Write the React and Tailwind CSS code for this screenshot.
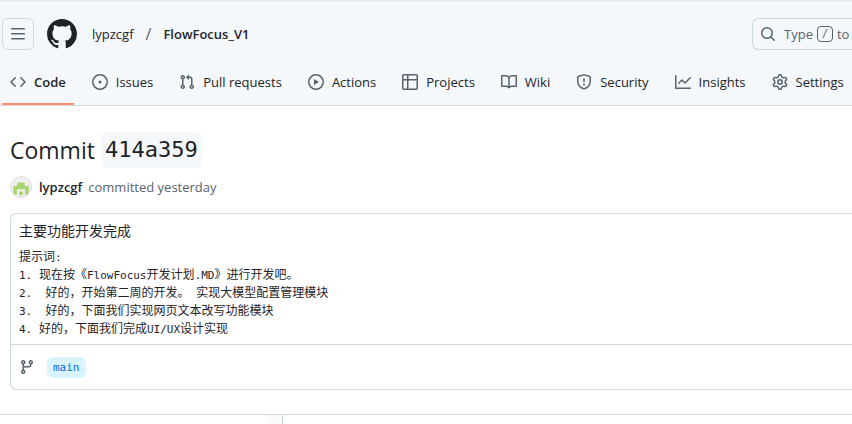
const icons = {
  bars: "M1 2.75A.75.75 0 0 1 1.75 2h12.5a.75.75 0 0 1 0 1.5H1.75A.75.75 0 0 1 1 2.75Zm0 5A.75.75 0 0 1 1.75 7h12.5a.75.75 0 0 1 0 1.5H1.75A.75.75 0 0 1 1 7.75ZM1.75 12h12.5a.75.75 0 0 1 0 1.5H1.75a.75.75 0 0 1 0-1.5Z",
  github:
    "M8 0c4.42 0 8 3.58 8 8a8.013 8.013 0 0 1-5.45 7.59c-.4.08-.55-.17-.55-.38 0-.27.01-1.13.01-2.2 0-.75-.25-1.23-.54-1.48 1.78-.2 3.65-.88 3.65-3.95 0-.88-.31-1.59-.82-2.15.08-.2.36-1.02-.08-2.12 0 0-.67-.22-2.2.82-.64-.18-1.32-.27-2-.27-.68 0-1.36.09-2 .27-1.53-1.03-2.2-.82-2.2-.82-.44 1.1-.16 1.92-.08 2.12-.51.56-.82 1.28-.82 2.15 0 3.06 1.86 3.75 3.64 3.95-.23.2-.44.55-.51 1.07-.46.21-1.61.55-2.33-.66-.15-.24-.6-.83-1.23-.82-.67.01-.27.38.01.53.34.19.73.9.82 1.13.16.45.68 1.31 2.69.94 0 .67.01 1.3.01 1.49 0 .21-.15.45-.55.38A7.995 7.995 0 0 1 0 8c0-4.42 3.58-8 8-8Z",
  search:
    "M10.68 11.74a6 6 0 0 1-7.922-8.982 6 6 0 0 1 8.982 7.922l3.04 3.04a.749.749 0 0 1-.326 1.275.749.749 0 0 1-.734-.215ZM11.5 7a4.499 4.499 0 1 0-8.997 0A4.499 4.499 0 0 0 11.5 7Z",
  code: "m11.28 3.22 4.25 4.25a.75.75 0 0 1 0 1.06l-4.25 4.25a.749.749 0 0 1-1.275-.326.749.749 0 0 1 .215-.734L13.94 8l-3.72-3.72a.749.749 0 0 1 .326-1.275.749.749 0 0 1 .734.215Zm-6.56 0a.751.751 0 0 1 1.042.018.751.751 0 0 1 .018 1.042L2.06 8l3.72 3.72a.749.749 0 0 1-.326 1.275.749.749 0 0 1-.734-.215L.47 8.53a.75.75 0 0 1 0-1.06Z",
  issue:
    "M8 9.5a1.5 1.5 0 1 0 0-3 1.5 1.5 0 0 0 0 3ZM8 0a8 8 0 1 1 0 16A8 8 0 0 1 8 0ZM1.5 8a6.5 6.5 0 1 0 13 0 6.5 6.5 0 0 0-13 0Z",
  pull: "M1.5 3.25a2.25 2.25 0 1 1 3 2.122v5.256a2.251 2.251 0 1 1-1.5 0V5.372A2.25 2.25 0 0 1 1.5 3.25Zm5.677-.177L9.573.677A.25.25 0 0 1 10 .854V2.5h1A2.5 2.5 0 0 1 13.5 5v5.628a2.251 2.251 0 1 1-1.5 0V5a1 1 0 0 0-1-1h-1v1.646a.25.25 0 0 1-.427.177L7.177 3.427a.25.25 0 0 1 0-.354ZM3.75 2.5a.75.75 0 1 0 0 1.5.75.75 0 0 0 0-1.5Zm0 9.5a.75.75 0 1 0 0 1.5.75.75 0 0 0 0-1.5Zm8.25.75a.75.75 0 1 0 1.5 0 .75.75 0 0 0-1.5 0Z",
  play: "M8 0a8 8 0 1 1 0 16A8 8 0 0 1 8 0ZM1.5 8a6.5 6.5 0 1 0 13 0 6.5 6.5 0 0 0-13 0Zm4.879-2.773 4.264 2.559a.25.25 0 0 1 0 .428l-4.264 2.559A.25.25 0 0 1 6 10.559V5.442a.25.25 0 0 1 .379-.215Z",
  table:
    "M0 1.75C0 .784.784 0 1.75 0h12.5C15.216 0 16 .784 16 1.75v12.5A1.75 1.75 0 0 1 14.25 16H1.75A1.75 1.75 0 0 1 0 14.25ZM6.5 6.5v8h7.75a.25.25 0 0 0 .25-.25V6.5Zm8-1.5V1.75a.25.25 0 0 0-.25-.25H6.5V5Zm-13 1.5v7.75c0 .138.112.25.25.25H5v-8ZM5 5V1.5H1.75a.25.25 0 0 0-.25.25V5Z",
  book: "M0 1.75A.75.75 0 0 1 .75 1h4.253c1.227 0 2.317.59 3 1.501A3.743 3.743 0 0 1 11.006 1h4.245a.75.75 0 0 1 .75.75v10.5a.75.75 0 0 1-.75.75h-4.507a2.25 2.25 0 0 0-1.591.659l-.622.621a.75.75 0 0 1-1.06 0l-.622-.621A2.25 2.25 0 0 0 5.258 13H.75a.75.75 0 0 1-.75-.75Zm7.251 10.324.004-5.073-.002-2.253A2.25 2.25 0 0 0 5.003 2.5H1.5v9h3.757a3.75 3.75 0 0 1 1.994.574ZM8.755 4.75l-.004 7.322a3.752 3.752 0 0 1 1.992-.572H14.5v-9h-3.495a2.25 2.25 0 0 0-2.25 2.25Z",
  shield:
    "M7.467.133a1.748 1.748 0 0 1 1.066 0l5.25 1.68A1.75 1.75 0 0 1 15 3.48V7c0 1.566-.32 3.182-1.303 4.682-.983 1.498-2.585 2.813-5.032 3.855a1.697 1.697 0 0 1-1.33 0c-2.447-1.042-4.049-2.357-5.032-3.855C1.32 10.182 1 8.566 1 7V3.48a1.75 1.75 0 0 1 1.217-1.667Zm.61 1.429a.25.25 0 0 0-.153 0l-5.25 1.68a.25.25 0 0 0-.174.238V7c0 1.358.275 2.666 1.057 3.86.784 1.194 2.121 2.34 4.366 3.297a.196.196 0 0 0 .154 0c2.245-.956 3.582-2.104 4.366-3.298C13.225 9.666 13.5 8.36 13.5 7V3.48a.251.251 0 0 0-.174-.237l-5.25-1.68ZM8.75 4.75v3a.75.75 0 0 1-1.5 0v-3a.75.75 0 0 1 1.5 0ZM9 10.5a1 1 0 1 1-2 0 1 1 0 0 1 2 0Z",
  graph:
    "M1.5 1.75V13.5h13.75a.75.75 0 0 1 0 1.5H.75a.75.75 0 0 1-.75-.75V1.75a.75.75 0 0 1 1.5 0Zm14.28 2.53-5.25 5.25a.75.75 0 0 1-1.06 0L7 7.06 4.28 9.78a.751.751 0 0 1-1.042-.018.751.751 0 0 1-.018-1.042l3.25-3.25a.75.75 0 0 1 1.06 0L10 7.94l4.72-4.72a.751.751 0 0 1 1.042.018.751.751 0 0 1 .018 1.042Z",
  gear: "M8 0a8.2 8.2 0 0 1 .701.031C9.444.095 9.99.645 10.16 1.29l.288 1.107c.018.066.079.158.212.224.231.114.454.243.668.386.123.082.233.09.299.071l1.103-.303c.644-.176 1.392.021 1.82.63.27.385.506.792.704 1.218.315.675.111 1.422-.364 1.891l-.814.806c-.049.048-.098.147-.088.294.016.257.016.515 0 .772-.01.147.038.246.088.294l.814.806c.475.469.679 1.216.364 1.891a7.977 7.977 0 0 1-.704 1.217c-.428.61-1.176.807-1.82.63l-1.102-.302c-.067-.019-.177-.011-.3.071a5.909 5.909 0 0 1-.668.386c-.133.066-.194.158-.211.224l-.29 1.106c-.168.646-.715 1.196-1.458 1.26a8.006 8.006 0 0 1-1.402 0c-.743-.064-1.289-.614-1.458-1.26l-.289-1.106c-.018-.066-.079-.158-.212-.224a5.738 5.738 0 0 1-.668-.386c-.123-.082-.233-.09-.299-.071l-1.103.303c-.644.176-1.392-.021-1.82-.63a8.12 8.12 0 0 1-.704-1.218c-.315-.675-.111-1.422.363-1.891l.815-.806c.05-.048.098-.147.088-.294a6.214 6.214 0 0 1 0-.772c.01-.147-.038-.246-.088-.294l-.815-.806C.635 6.045.431 5.298.746 4.623a7.92 7.92 0 0 1 .704-1.217c.428-.61 1.176-.807 1.82-.63l1.102.302c.067.019.177.011.3-.071.214-.143.437-.272.668-.386.133-.066.194-.158.211-.224l.29-1.106C6.009.645 6.556.095 7.299.03 7.53.01 7.764 0 8 0Zm-.571 1.525c-.036.003-.108.036-.137.146l-.289 1.105c-.147.561-.549.967-.998 1.189-.173.086-.34.183-.5.29-.417.278-.97.423-1.529.27l-1.103-.303c-.109-.03-.175.016-.195.045-.22.312-.412.644-.573.99-.014.031-.021.11.059.19l.815.806c.411.406.562.957.53 1.456a4.709 4.709 0 0 0 0 .582c.032.499-.119 1.05-.53 1.456l-.815.806c-.081.08-.073.159-.059.19.162.346.353.677.573.989.02.03.085.076.195.046l1.102-.303c.56-.153 1.113-.008 1.53.27.161.107.328.204.501.29.447.222.85.629.997 1.189l.289 1.105c.029.109.101.143.137.146a6.6 6.6 0 0 0 1.142 0c.036-.003.108-.036.137-.146l.289-1.105c.147-.561.549-.967.998-1.189.173-.086.34-.183.5-.29.417-.278.97-.423 1.529-.27l1.103.303c.109.029.175-.016.195-.045.22-.313.411-.644.573-.99.014-.031.021-.11-.059-.19l-.815-.806c-.411-.406-.562-.957-.53-1.456a4.709 4.709 0 0 0 0-.582c-.032-.499.119-1.05.53-1.456l.815-.806c.081-.08.073-.159.059-.19a6.464 6.464 0 0 0-.573-.989c-.02-.03-.085-.076-.195-.046l-1.102.303c-.56.153-1.113.008-1.53-.27a4.44 4.44 0 0 0-.501-.29c-.447-.222-.85-.629-.997-1.189l-.289-1.105c-.029-.11-.101-.143-.137-.146a6.6 6.6 0 0 0-1.142 0ZM11 8a3 3 0 1 1-6 0 3 3 0 0 1 6 0ZM9.5 8a1.5 1.5 0 1 0-3.001.001A1.5 1.5 0 0 0 9.5 8Z",
  branch:
    "M9.5 3.25a2.25 2.25 0 1 1 3 2.122V6A2.5 2.5 0 0 1 10 8.5H6a1 1 0 0 0-1 1v1.128a2.251 2.251 0 1 1-1.5 0V5.372a2.25 2.25 0 1 1 1.5 0v1.836A2.493 2.493 0 0 1 6 7h4a1 1 0 0 0 1-1v-.628A2.25 2.25 0 0 1 9.5 3.25Zm-6 0a.75.75 0 1 0 1.5 0 .75.75 0 0 0-1.5 0Zm8.25-.75a.75.75 0 1 0 0 1.5.75.75 0 0 0 0-1.5ZM4.25 12a.75.75 0 1 0 0 1.5.75.75 0 0 0 0-1.5Z",
};

const tabs = [
  { label: "Code", icon: "code", active: true },
  { label: "Issues", icon: "issue" },
  { label: "Pull requests", icon: "pull" },
  { label: "Actions", icon: "play" },
  { label: "Projects", icon: "table" },
  { label: "Wiki", icon: "book" },
  { label: "Security", icon: "shield" },
  { label: "Insights", icon: "graph" },
  { label: "Settings", icon: "gear" },
];

const message = `提示词:
1. 现在按《FlowFocus开发计划.MD》进行开发吧。
2.  好的，开始第二周的开发。 实现大模型配置管理模块
3.  好的，下面我们实现网页文本改写功能模块
4. 好的，下面我们完成UI/UX设计实现`;

function Icon({ name, className = "size-4 text-[#59636e]" }) {
  return (
    <svg
      viewBox="0 0 16 16"
      fill="currentColor"
      aria-hidden="true"
      className={`shrink-0 ${className}`}
    >
      <path d={icons[name]} />
    </svg>
  );
}

function Header() {
  return (
    <header className="bg-[#f4f8fb] border-t-2 border-b border-t-[#ebebeb] border-b-[#cfd9e0] overflow-hidden">
      <div className="flex items-center pt-4 pl-0.5">
        <button
          aria-label="Open menu"
          className="size-8 shrink-0 flex items-center justify-center rounded-md border border-[#cfd9e0]"
        >
          <Icon name="bars" />
        </button>
        <a href="#" aria-label="Homepage" className="ml-[13px] shrink-0">
          <Icon name="github" className="size-[30px] text-[#1f2328]" />
        </a>
        <nav aria-label="Breadcrumb" className="ml-[15px] flex items-center">
          <a href="#">lypzcgf</a>
          <span className="px-3 text-base leading-5 text-[#59636e]">/</span>
          <a href="#" className="font-semibold">
            FlowFocus_V1
          </a>
        </nav>
        <button className="ml-auto w-[100px] h-8 shrink-0 flex items-center pl-[7px] rounded-l-md border border-r-0 border-[#cfd9e0] text-[#59636e] whitespace-nowrap">
          <Icon name="search" />
          <span className="ml-2">Type</span>
          <kbd className="mx-1 size-4 flex items-center justify-center rounded-sm border border-[#59636e] font-['DejaVu_Sans_Mono',monospace] text-[10px]">
            /
          </kbd>
          <span>to</span>
        </button>
      </div>
      <nav aria-label="Repository" className="mt-2 pl-0.5">
        <ul className="flex gap-2.5">
          {tabs.map((tab) => (
            <li
              key={tab.label}
              className={`shrink-0 border-b-2 pt-2 pb-[5px] ${
                tab.active ? "border-[#fd8c73]" : "border-transparent"
              }`}
            >
              <a
                href="#"
                className={`flex items-center gap-2 h-8 px-2 ${
                  tab.active ? "font-semibold" : ""
                }`}
              >
                <Icon name={tab.icon} />
                {tab.label}
              </a>
            </li>
          ))}
        </ul>
      </nav>
    </header>
  );
}

function Avatar() {
  return (
    <svg
      viewBox="0 0 22 22"
      className="size-[22px] shrink-0 rounded-full border border-[#dcdcdc] bg-[#f0f0f0]"
      aria-hidden="true"
    >
      <path
        fill="#a9d46f"
        d="M7 6h8v4h4.500v9.500h-4V13.500h-9v6h-4V10H7zM9 16h4v4H9z"
      />
    </svg>
  );
}

// Chinese runs are set one size larger than the monospace text around them
function CommitMessage() {
  return (
    <pre className="mt-2 font-['DejaVu_Sans_Mono',monospace] text-[11px] leading-[18px]">
      {message.split(/([\u3001-\uffee]+)/).map((part, i) =>
        i % 2 ? (
          <span
            key={i}
            className="font-['Noto_Sans_CJK_SC',sans-serif] text-[12px] leading-none"
          >
            {part}
          </span>
        ) : (
          part
        )
      )}
    </pre>
  );
}

function Commit() {
  return (
    <section className="pl-2.5 pt-[26px]">
      <h1 className="flex items-center gap-1.5 text-[23px] leading-9">
        Commit
        <span className="h-9 px-1 rounded-md bg-[#f4f8fb] font-['DejaVu_Sans_Mono',monospace] text-[22px]">
          414a359
        </span>
      </h1>
      <div className="mt-2 flex items-center h-[22px]">
        <Avatar />
        <a href="#" className="ml-[7px] font-semibold">
          lypzcgf
        </a>
        <span className="ml-1.5 text-[#59636e]">committed yesterday</span>
      </div>
      <div className="mt-[15px] rounded-l-md border border-r-0 border-[#cfd9e0]">
        <div className="px-2 pt-[7px] pb-[5px]">
          <p className="text-sm leading-5">主要功能开发完成</p>
          <CommitMessage />
        </div>
        <div className="flex items-center gap-3 h-[45px] px-2 border-t border-[#cfd9e0]">
          <Icon name="branch" />
          <a
            href="#"
            className="px-1.5 rounded-md bg-[#d9f4ff] text-[#0969da] font-['DejaVu_Sans_Mono',monospace] text-[11px] leading-[21px]"
          >
            main
          </a>
        </div>
      </div>
    </section>
  );
}

function App() {
  return (
    <div className="h-screen flex flex-col overflow-hidden bg-white text-[#1f2328] text-[13px] leading-5 font-['Open_Sans','Noto_Sans_CJK_SC',sans-serif]">
      <Header />
      <Commit />
      <div className="mt-6 grow flex border-t border-[#cfd9e0]">
        <aside className="w-[283px] flex justify-end border-r border-[#cfd9e0]">
          <div className="w-[15px] bg-[#fafafa]" />
        </aside>
      </div>
    </div>
  );
}

export default App;
